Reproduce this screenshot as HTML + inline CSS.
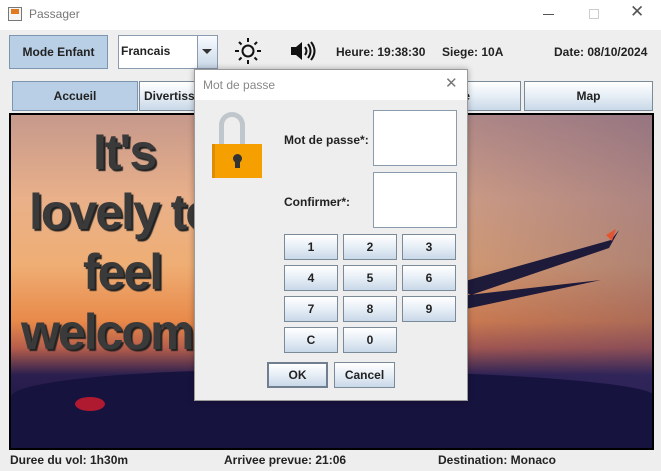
<!DOCTYPE html>
<html><head><style>
*{margin:0;padding:0;box-sizing:border-box}
body{width:661px;height:471px;background:#eeeeee;font-family:"Liberation Sans",Arial,sans-serif;position:relative;overflow:hidden;font-size:12px;color:#222}
.a{position:absolute}
.btn{position:absolute;border:1px solid #7a8a99;background:linear-gradient(#ffffff,#e6eef6 50%,#c9d8e8);font-weight:bold;font-size:12px;display:flex;align-items:center;justify-content:center;color:#222}
.b{font-weight:bold;font-size:12px;position:absolute}
.w{position:absolute;font-size:50px;font-weight:bold;color:#3a3a3a;line-height:50px;letter-spacing:-2px;text-shadow:2px 2px 1px #222;white-space:nowrap}
</style></head><body>
<div class="a" style="left:0;top:0;width:661px;height:30px;background:#fff"></div>
<div class="a" style="left:8px;top:7px;width:14px;height:14px;border:1px solid #777;background:#f5f5f5"></div>
<div class="a" style="left:11px;top:9px;width:8px;height:5px;background:#e07a20"></div>
<div class="a" style="left:29px;top:7px;font-size:12px;color:#777">Passager</div>
<div class="a" style="left:543px;top:14px;width:11px;height:1px;background:#555"></div>
<div class="a" style="left:589px;top:9px;width:10px;height:10px;border:1px solid #ccc"></div>
<div class="a" style="left:630px;top:2px;font-size:17px;color:#555">✕</div>

<div class="btn" style="left:9px;top:35px;width:99px;height:34px;background:#b8cfe6;border-color:#7d96b0">Mode Enfant</div>
<div class="a" style="left:118px;top:35px;width:100px;height:34px;border:1px solid #8a9bb0;background:#fff"></div>
<div class="a" style="left:121px;top:44px;font-weight:bold">Francais</div>
<div class="a" style="left:197px;top:35px;width:21px;height:34px;border:1px solid #8a9bb0;background:linear-gradient(#f8fbff,#c9d8e8)"></div>
<div class="a" style="left:202px;top:49px;width:0;height:0;border-left:5px solid transparent;border-right:5px solid transparent;border-top:5px solid #333"></div>
<svg class="a" style="left:234px;top:37px" width="28" height="28" viewBox="0 0 28 28"><circle cx="14" cy="14" r="5.5" fill="none" stroke="#111" stroke-width="2"/><g stroke="#111" stroke-width="2"><line x1="14" y1="1" x2="14" y2="5"/><line x1="14" y1="23" x2="14" y2="27"/><line x1="1" y1="14" x2="5" y2="14"/><line x1="23" y1="14" x2="27" y2="14"/><line x1="5" y1="5" x2="7.5" y2="7.5"/><line x1="20.5" y1="20.5" x2="23" y2="23"/><line x1="5" y1="23" x2="7.5" y2="20.5"/><line x1="20.5" y1="7.5" x2="23" y2="5"/></g></svg>
<svg class="a" style="left:290px;top:40px" width="26" height="22" viewBox="0 0 26 22"><path d="M1 7h5l6-5v18l-6-5H1z" fill="#111"/><path d="M15 7q3 4 0 8M18 4q5 7 0 14M21 2q7 9 0 18" fill="none" stroke="#111" stroke-width="2"/></svg>
<div class="b" style="left:336px;top:45px">Heure: 19:38:30</div>
<div class="b" style="left:442px;top:45px">Siege: 10A</div>
<div class="b" style="left:554px;top:45px">Date: 08/10/2024</div>

<div class="btn" style="left:12px;top:81px;width:126px;height:30px;background:#b8cfe6;border-color:#7d96b0">Accueil</div>
<div class="btn" style="left:139px;top:81px;width:126px;height:30px;justify-content:flex-start;padding-left:4px">Divertissement</div>
<div class="btn" style="left:395px;top:81px;width:126px;height:30px;justify-content:flex-end;padding-right:50px">ure</div>
<div class="btn" style="left:524px;top:81px;width:129px;height:30px">Map</div>

<div class="a" style="left:9px;top:113px;width:645px;height:337px;border:2px solid #000;overflow:hidden;background:linear-gradient(90deg,rgba(0,0,0,0) 40%,rgba(60,50,110,.35) 100%),linear-gradient(180deg,#c6998c 0%,#e9b08a 25%,#efae74 45%,#e8894a 62%,#b55d4b 70%,#2b1f4f 78%,#15123f 100%)">
<div class="w" style="left:82px;top:12px">It's</div>
<div class="w" style="left:18px;top:72px">lovely to</div>
<div class="w" style="left:72px;top:132px">feel</div>
<div class="w" style="left:10px;top:192px">welcome</div>
<div class="a" style="left:0;top:255px;width:645px;height:90px;background:#17133f;border-radius:40% 60% 0 0/30% 30% 0 0"></div>
<div class="a" style="left:64px;top:282px;width:30px;height:14px;background:#b01a30;border-radius:50%"></div>
<svg class="a" style="left:440px;top:110px" width="170" height="90" viewBox="0 0 170 90"><path d="M0 60L160 15l8-10-10 18L20 70z M0 72L150 55l-140 30z" fill="#1d1a3a"/><path d="M155 10l10-6-4 12z" fill="#e25530"/></svg>
</div>

<div class="b" style="left:10px;top:453px">Duree du vol: 1h30m</div>
<div class="b" style="left:224px;top:453px">Arrivee prevue: 21:06</div>
<div class="b" style="left:438px;top:453px">Destination: Monaco</div>

<div class="a" style="left:194px;top:69px;width:274px;height:332px;background:#eeeeee;border:1px solid #9a9a9a;box-shadow:0 0 6px rgba(0,0,0,.3)">
<div class="a" style="left:0;top:0;width:272px;height:30px;background:#fff"></div>
<div class="a" style="left:8px;top:8px;font-size:12px;color:#888">Mot de passe</div>
<div class="a" style="left:250px;top:4px;font-size:15px;color:#777">✕</div>
<div class="a" style="left:24px;top:42px;width:26px;height:38px;border:5px solid #c0c7cc;border-bottom:none;border-radius:13px 13px 0 0"></div>
<div class="a" style="left:17px;top:74px;width:50px;height:34px;background:#f5a000;border-left:3px solid #e08c00"></div>
<div class="a" style="left:38px;top:84px;width:9px;height:9px;border-radius:50%;background:#333"></div>
<div class="a" style="left:40px;top:90px;width:5px;height:8px;background:#333"></div>
<div class="b" style="left:89px;top:63px">Mot de passe*:</div>
<div class="b" style="left:89px;top:125px">Confirmer*:</div>
<div class="a" style="left:178px;top:40px;width:84px;height:56px;background:#fff;border:1px solid #8a9bb0"></div>
<div class="a" style="left:178px;top:102px;width:84px;height:56px;background:#fff;border:1px solid #8a9bb0"></div>
<div class="btn" style="left:89px;top:164px;width:54px;height:26px">1</div>
<div class="btn" style="left:148px;top:164px;width:54px;height:26px">2</div>
<div class="btn" style="left:207px;top:164px;width:54px;height:26px">3</div>
<div class="btn" style="left:89px;top:195px;width:54px;height:26px">4</div>
<div class="btn" style="left:148px;top:195px;width:54px;height:26px">5</div>
<div class="btn" style="left:207px;top:195px;width:54px;height:26px">6</div>
<div class="btn" style="left:89px;top:226px;width:54px;height:26px">7</div>
<div class="btn" style="left:148px;top:226px;width:54px;height:26px">8</div>
<div class="btn" style="left:207px;top:226px;width:54px;height:26px">9</div>
<div class="btn" style="left:89px;top:257px;width:54px;height:26px">C</div>
<div class="btn" style="left:148px;top:257px;width:54px;height:26px">0</div>
<div class="btn" style="left:72px;top:292px;width:61px;height:26px;border:2px solid #6f7f90">OK</div>
<div class="btn" style="left:139px;top:292px;width:61px;height:26px">Cancel</div>
</div>
</body></html>
